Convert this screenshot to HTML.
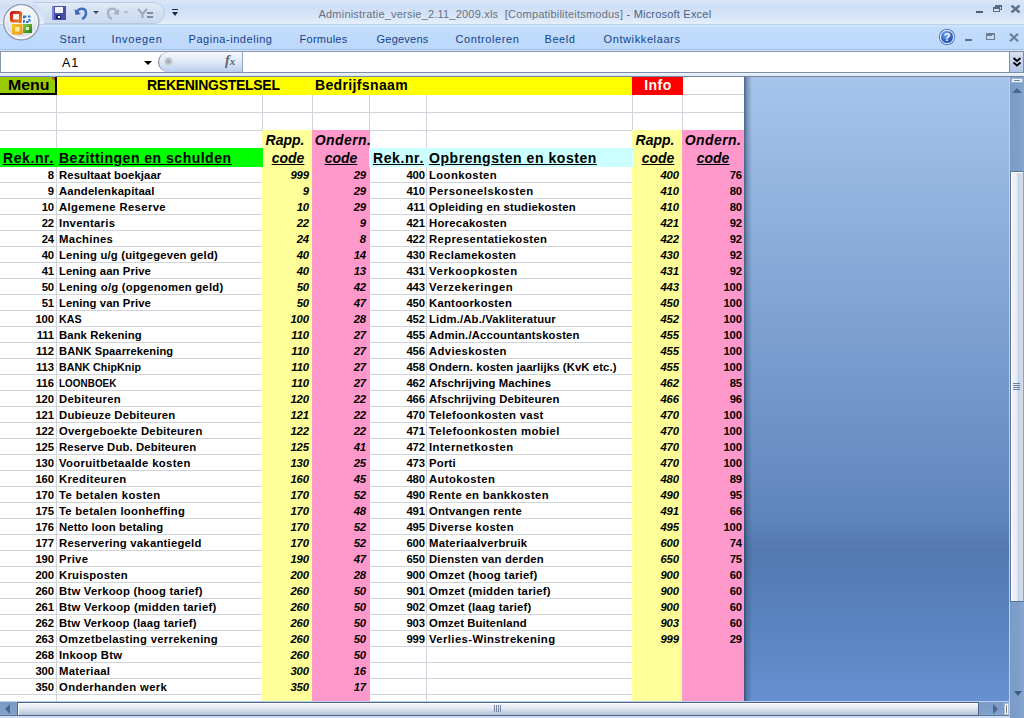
<!DOCTYPE html>
<html><head><meta charset="utf-8"><style>
html,body{margin:0;padding:0;width:1024px;height:718px;overflow:hidden;background:#fff}
body{position:relative;font-family:"Liberation Sans",sans-serif}
div,i{position:absolute;display:block}
i{font-style:normal;white-space:nowrap}
.d{font-size:11.3px;font-weight:bold;line-height:16px;color:#000;letter-spacing:0.1px}
.it{font-style:italic}
.h1{font-size:14px;font-weight:bold;line-height:17px;color:#000}
.h2{font-size:14px;font-weight:bold;line-height:18px;color:#000}
.wt{color:#fff}
.n{letter-spacing:-0.1px}
</style></head><body>
<div style="left:0px;top:77px;width:744px;height:624px;background:#ffffff;"></div>
<div style="left:56px;top:77px;width:1px;height:624px;background:#d1d3da;"></div>
<div style="left:262px;top:77px;width:1px;height:624px;background:#d1d3da;"></div>
<div style="left:312px;top:77px;width:1px;height:624px;background:#d1d3da;"></div>
<div style="left:369px;top:77px;width:1px;height:624px;background:#d1d3da;"></div>
<div style="left:426px;top:77px;width:1px;height:624px;background:#d1d3da;"></div>
<div style="left:632px;top:77px;width:1px;height:624px;background:#d1d3da;"></div>
<div style="left:682px;top:77px;width:1px;height:624px;background:#d1d3da;"></div>
<div style="left:0px;top:94px;width:744px;height:1px;background:#d1d3da;"></div>
<div style="left:0px;top:112px;width:744px;height:1px;background:#d1d3da;"></div>
<div style="left:0px;top:130px;width:744px;height:1px;background:#d1d3da;"></div>
<div style="left:0px;top:148px;width:744px;height:1px;background:#d1d3da;"></div>
<div style="left:0px;top:166px;width:744px;height:1px;background:#d1d3da;"></div>
<div style="left:0px;top:182px;width:744px;height:1px;background:#d1d3da;"></div>
<div style="left:0px;top:198px;width:744px;height:1px;background:#d1d3da;"></div>
<div style="left:0px;top:214px;width:744px;height:1px;background:#d1d3da;"></div>
<div style="left:0px;top:230px;width:744px;height:1px;background:#d1d3da;"></div>
<div style="left:0px;top:246px;width:744px;height:1px;background:#d1d3da;"></div>
<div style="left:0px;top:262px;width:744px;height:1px;background:#d1d3da;"></div>
<div style="left:0px;top:278px;width:744px;height:1px;background:#d1d3da;"></div>
<div style="left:0px;top:294px;width:744px;height:1px;background:#d1d3da;"></div>
<div style="left:0px;top:310px;width:744px;height:1px;background:#d1d3da;"></div>
<div style="left:0px;top:326px;width:744px;height:1px;background:#d1d3da;"></div>
<div style="left:0px;top:342px;width:744px;height:1px;background:#d1d3da;"></div>
<div style="left:0px;top:358px;width:744px;height:1px;background:#d1d3da;"></div>
<div style="left:0px;top:374px;width:744px;height:1px;background:#d1d3da;"></div>
<div style="left:0px;top:390px;width:744px;height:1px;background:#d1d3da;"></div>
<div style="left:0px;top:406px;width:744px;height:1px;background:#d1d3da;"></div>
<div style="left:0px;top:422px;width:744px;height:1px;background:#d1d3da;"></div>
<div style="left:0px;top:438px;width:744px;height:1px;background:#d1d3da;"></div>
<div style="left:0px;top:454px;width:744px;height:1px;background:#d1d3da;"></div>
<div style="left:0px;top:470px;width:744px;height:1px;background:#d1d3da;"></div>
<div style="left:0px;top:486px;width:744px;height:1px;background:#d1d3da;"></div>
<div style="left:0px;top:502px;width:744px;height:1px;background:#d1d3da;"></div>
<div style="left:0px;top:518px;width:744px;height:1px;background:#d1d3da;"></div>
<div style="left:0px;top:534px;width:744px;height:1px;background:#d1d3da;"></div>
<div style="left:0px;top:550px;width:744px;height:1px;background:#d1d3da;"></div>
<div style="left:0px;top:566px;width:744px;height:1px;background:#d1d3da;"></div>
<div style="left:0px;top:582px;width:744px;height:1px;background:#d1d3da;"></div>
<div style="left:0px;top:598px;width:744px;height:1px;background:#d1d3da;"></div>
<div style="left:0px;top:614px;width:744px;height:1px;background:#d1d3da;"></div>
<div style="left:0px;top:630px;width:744px;height:1px;background:#d1d3da;"></div>
<div style="left:0px;top:646px;width:744px;height:1px;background:#d1d3da;"></div>
<div style="left:0px;top:662px;width:744px;height:1px;background:#d1d3da;"></div>
<div style="left:0px;top:678px;width:744px;height:1px;background:#d1d3da;"></div>
<div style="left:0px;top:694px;width:744px;height:1px;background:#d1d3da;"></div>
<div style="left:0px;top:77px;width:57px;height:18px;background:#99cc00;"></div>
<div style="left:56px;top:77px;width:577px;height:18px;background:#ffff00;"></div>
<div style="left:632px;top:77px;width:51px;height:18px;background:#ff0000;"></div>
<div style="left:262px;top:130px;width:51px;height:571px;background:#ffff99;"></div>
<div style="left:312px;top:130px;width:58px;height:571px;background:#ff99cc;"></div>
<div style="left:632px;top:130px;width:51px;height:571px;background:#ffff99;"></div>
<div style="left:682px;top:130px;width:62px;height:571px;background:#ff99cc;"></div>
<div style="left:0px;top:148px;width:263px;height:19px;background:#00ff00;"></div>
<div style="left:369px;top:148px;width:264px;height:19px;background:#ccffff;"></div>
<i class="d n" style="right:970px;top:167px">8</i>
<i class="d" style="left:59px;top:167px;letter-spacing:0.1px">Resultaat boekjaar</i>
<i class="d it n" style="right:715px;top:167px">999</i>
<i class="d it n" style="right:658px;top:167px">29</i>
<i class="d n" style="right:970px;top:183px">9</i>
<i class="d" style="left:59px;top:183px;letter-spacing:0.167px">Aandelenkapitaal</i>
<i class="d it n" style="right:715px;top:183px">9</i>
<i class="d it n" style="right:658px;top:183px">29</i>
<i class="d n" style="right:970px;top:199px">10</i>
<i class="d" style="left:59px;top:199px;letter-spacing:0.367px">Algemene Reserve</i>
<i class="d it n" style="right:715px;top:199px">10</i>
<i class="d it n" style="right:658px;top:199px">29</i>
<i class="d n" style="right:970px;top:215px">22</i>
<i class="d" style="left:59px;top:215px;letter-spacing:0.289px">Inventaris</i>
<i class="d it n" style="right:715px;top:215px">22</i>
<i class="d it n" style="right:658px;top:215px">9</i>
<i class="d n" style="right:970px;top:231px">24</i>
<i class="d" style="left:59px;top:231px;letter-spacing:0.343px">Machines</i>
<i class="d it n" style="right:715px;top:231px">24</i>
<i class="d it n" style="right:658px;top:231px">8</i>
<i class="d n" style="right:970px;top:247px">40</i>
<i class="d" style="left:59px;top:247px;letter-spacing:0.185px">Lening u/g (uitgegeven geld)</i>
<i class="d it n" style="right:715px;top:247px">40</i>
<i class="d it n" style="right:658px;top:247px">14</i>
<i class="d n" style="right:970px;top:263px">41</i>
<i class="d" style="left:59px;top:263px;letter-spacing:0.093px">Lening aan Prive</i>
<i class="d it n" style="right:715px;top:263px">40</i>
<i class="d it n" style="right:658px;top:263px">13</i>
<i class="d n" style="right:970px;top:279px">50</i>
<i class="d" style="left:59px;top:279px;letter-spacing:0.231px">Lening o/g (opgenomen geld)</i>
<i class="d it n" style="right:715px;top:279px">50</i>
<i class="d it n" style="right:658px;top:279px">42</i>
<i class="d n" style="right:970px;top:295px">51</i>
<i class="d" style="left:59px;top:295px;letter-spacing:0.093px">Lening van Prive</i>
<i class="d it n" style="right:715px;top:295px">50</i>
<i class="d it n" style="right:658px;top:295px">47</i>
<i class="d n" style="right:970px;top:311px">100</i>
<i class="d" style="left:59px;top:311px;transform:scaleX(0.944);transform-origin:0 0">KAS</i>
<i class="d it n" style="right:715px;top:311px">100</i>
<i class="d it n" style="right:658px;top:311px">28</i>
<i class="d n" style="right:970px;top:327px">111</i>
<i class="d" style="left:59px;top:327px;letter-spacing:0.092px">Bank Rekening</i>
<i class="d it n" style="right:715px;top:327px">110</i>
<i class="d it n" style="right:658px;top:327px">27</i>
<i class="d n" style="right:970px;top:343px">112</i>
<i class="d" style="left:59px;top:343px;transform:scaleX(0.984);transform-origin:0 0">BANK Spaarrekening</i>
<i class="d it n" style="right:715px;top:343px">110</i>
<i class="d it n" style="right:658px;top:343px">27</i>
<i class="d n" style="right:970px;top:359px">113</i>
<i class="d" style="left:59px;top:359px;transform:scaleX(0.940);transform-origin:0 0">BANK ChipKnip</i>
<i class="d it n" style="right:715px;top:359px">110</i>
<i class="d it n" style="right:658px;top:359px">27</i>
<i class="d n" style="right:970px;top:375px">116</i>
<i class="d" style="left:59px;top:375px;transform:scaleX(0.869);transform-origin:0 0">LOONBOEK</i>
<i class="d it n" style="right:715px;top:375px">110</i>
<i class="d it n" style="right:658px;top:375px">27</i>
<i class="d n" style="right:970px;top:391px">120</i>
<i class="d" style="left:59px;top:391px;letter-spacing:0.3px">Debiteuren</i>
<i class="d it n" style="right:715px;top:391px">120</i>
<i class="d it n" style="right:658px;top:391px">22</i>
<i class="d n" style="right:970px;top:407px">121</i>
<i class="d" style="left:59px;top:407px;letter-spacing:0.217px">Dubieuze Debiteuren</i>
<i class="d it n" style="right:715px;top:407px">121</i>
<i class="d it n" style="right:658px;top:407px">22</i>
<i class="d n" style="right:970px;top:423px">122</i>
<i class="d" style="left:59px;top:423px;letter-spacing:0.264px">Overgeboekte Debiteuren</i>
<i class="d it n" style="right:715px;top:423px">122</i>
<i class="d it n" style="right:658px;top:423px">22</i>
<i class="d n" style="right:970px;top:439px">125</i>
<i class="d" style="left:59px;top:439px;letter-spacing:0.127px">Reserve Dub. Debiteuren</i>
<i class="d it n" style="right:715px;top:439px">125</i>
<i class="d it n" style="right:658px;top:439px">41</i>
<i class="d n" style="right:970px;top:455px">130</i>
<i class="d" style="left:59px;top:455px;letter-spacing:0.348px">Vooruitbetaalde kosten</i>
<i class="d it n" style="right:715px;top:455px">130</i>
<i class="d it n" style="right:658px;top:455px">25</i>
<i class="d n" style="right:970px;top:471px">160</i>
<i class="d" style="left:59px;top:471px;letter-spacing:0.38px">Krediteuren</i>
<i class="d it n" style="right:715px;top:471px">160</i>
<i class="d it n" style="right:658px;top:471px">45</i>
<i class="d n" style="right:970px;top:487px">170</i>
<i class="d" style="left:59px;top:487px;letter-spacing:0.412px">Te betalen kosten</i>
<i class="d it n" style="right:715px;top:487px">170</i>
<i class="d it n" style="right:658px;top:487px">52</i>
<i class="d n" style="right:970px;top:503px">175</i>
<i class="d" style="left:59px;top:503px;letter-spacing:0.295px">Te betalen loonheffing</i>
<i class="d it n" style="right:715px;top:503px">170</i>
<i class="d it n" style="right:658px;top:503px">48</i>
<i class="d n" style="right:970px;top:519px">176</i>
<i class="d" style="left:59px;top:519px;letter-spacing:0.1px">Netto loon betaling</i>
<i class="d it n" style="right:715px;top:519px">170</i>
<i class="d it n" style="right:658px;top:519px">52</i>
<i class="d n" style="right:970px;top:535px">177</i>
<i class="d" style="left:59px;top:535px;letter-spacing:0.239px">Reservering vakantiegeld</i>
<i class="d it n" style="right:715px;top:535px">170</i>
<i class="d it n" style="right:658px;top:535px">52</i>
<i class="d n" style="right:970px;top:551px">190</i>
<i class="d" style="left:59px;top:551px;letter-spacing:0.35px">Prive</i>
<i class="d it n" style="right:715px;top:551px">190</i>
<i class="d it n" style="right:658px;top:551px">47</i>
<i class="d n" style="right:970px;top:567px">200</i>
<i class="d" style="left:59px;top:567px;letter-spacing:0.28px">Kruisposten</i>
<i class="d it n" style="right:715px;top:567px">200</i>
<i class="d it n" style="right:658px;top:567px">28</i>
<i class="d n" style="right:970px;top:583px">260</i>
<i class="d" style="left:59px;top:583px;letter-spacing:0.25px">Btw Verkoop (hoog tarief)</i>
<i class="d it n" style="right:715px;top:583px">260</i>
<i class="d it n" style="right:658px;top:583px">50</i>
<i class="d n" style="right:970px;top:599px">261</i>
<i class="d" style="left:59px;top:599px;letter-spacing:0.281px">Btw Verkoop (midden tarief)</i>
<i class="d it n" style="right:715px;top:599px">260</i>
<i class="d it n" style="right:658px;top:599px">50</i>
<i class="d n" style="right:970px;top:615px">262</i>
<i class="d" style="left:59px;top:615px;letter-spacing:0.208px">Btw Verkoop (laag tarief)</i>
<i class="d it n" style="right:715px;top:615px">260</i>
<i class="d it n" style="right:658px;top:615px">50</i>
<i class="d n" style="right:970px;top:631px">263</i>
<i class="d" style="left:59px;top:631px;letter-spacing:0.296px">Omzetbelasting verrekening</i>
<i class="d it n" style="right:715px;top:631px">260</i>
<i class="d it n" style="right:658px;top:631px">50</i>
<i class="d n" style="right:970px;top:647px">268</i>
<i class="d" style="left:59px;top:647px;letter-spacing:0.233px">Inkoop Btw</i>
<i class="d it n" style="right:715px;top:647px">260</i>
<i class="d it n" style="right:658px;top:647px">50</i>
<i class="d n" style="right:970px;top:663px">300</i>
<i class="d" style="left:59px;top:663px;letter-spacing:0.238px">Materiaal</i>
<i class="d it n" style="right:715px;top:663px">300</i>
<i class="d it n" style="right:658px;top:663px">16</i>
<i class="d n" style="right:970px;top:679px">350</i>
<i class="d" style="left:59px;top:679px;letter-spacing:0.367px">Onderhanden werk</i>
<i class="d it n" style="right:715px;top:679px">350</i>
<i class="d it n" style="right:658px;top:679px">17</i>
<i class="d n" style="right:599px;top:167px">400</i>
<i class="d" style="left:429px;top:167px;letter-spacing:0.411px">Loonkosten</i>
<i class="d it n" style="right:345px;top:167px">400</i>
<i class="d n" style="right:282px;top:167px">76</i>
<i class="d n" style="right:599px;top:183px">410</i>
<i class="d" style="left:429px;top:183px;letter-spacing:0.5px">Personeelskosten</i>
<i class="d it n" style="right:345px;top:183px">410</i>
<i class="d n" style="right:282px;top:183px">80</i>
<i class="d n" style="right:599px;top:199px">411</i>
<i class="d" style="left:429px;top:199px;letter-spacing:0.221px">Opleiding en studiekosten</i>
<i class="d it n" style="right:345px;top:199px">410</i>
<i class="d n" style="right:282px;top:199px">80</i>
<i class="d n" style="right:599px;top:215px">421</i>
<i class="d" style="left:429px;top:215px;letter-spacing:0.273px">Horecakosten</i>
<i class="d it n" style="right:345px;top:215px">421</i>
<i class="d n" style="right:282px;top:215px">92</i>
<i class="d n" style="right:599px;top:231px">422</i>
<i class="d" style="left:429px;top:231px;letter-spacing:0.383px">Representatiekosten</i>
<i class="d it n" style="right:345px;top:231px">422</i>
<i class="d n" style="right:282px;top:231px">92</i>
<i class="d n" style="right:599px;top:247px">430</i>
<i class="d" style="left:429px;top:247px;letter-spacing:0.342px">Reclamekosten</i>
<i class="d it n" style="right:345px;top:247px">430</i>
<i class="d n" style="right:282px;top:247px">92</i>
<i class="d n" style="right:599px;top:263px">431</i>
<i class="d" style="left:429px;top:263px;letter-spacing:0.592px">Verkoopkosten</i>
<i class="d it n" style="right:345px;top:263px">431</i>
<i class="d n" style="right:282px;top:263px">92</i>
<i class="d n" style="right:599px;top:279px">443</i>
<i class="d" style="left:429px;top:279px;letter-spacing:0.592px">Verzekeringen</i>
<i class="d it n" style="right:345px;top:279px">443</i>
<i class="d n" style="right:282px;top:279px">100</i>
<i class="d n" style="right:599px;top:295px">450</i>
<i class="d" style="left:429px;top:295px;letter-spacing:0.258px">Kantoorkosten</i>
<i class="d it n" style="right:345px;top:295px">450</i>
<i class="d n" style="right:282px;top:295px">100</i>
<i class="d n" style="right:599px;top:311px">452</i>
<i class="d" style="left:429px;top:311px;letter-spacing:0.168px">Lidm./Ab./Vakliteratuur</i>
<i class="d it n" style="right:345px;top:311px">452</i>
<i class="d n" style="right:282px;top:311px">100</i>
<i class="d n" style="right:599px;top:327px">455</i>
<i class="d" style="left:429px;top:327px;letter-spacing:0.183px">Admin./Accountantskosten</i>
<i class="d it n" style="right:345px;top:327px">455</i>
<i class="d n" style="right:282px;top:327px">100</i>
<i class="d n" style="right:599px;top:343px">456</i>
<i class="d" style="left:429px;top:343px;letter-spacing:0.364px">Advieskosten</i>
<i class="d it n" style="right:345px;top:343px">455</i>
<i class="d n" style="right:282px;top:343px">100</i>
<i class="d n" style="right:599px;top:359px">458</i>
<i class="d" style="left:429px;top:359px;letter-spacing:0.103px">Ondern. kosten jaarlijks (KvK etc.)</i>
<i class="d it n" style="right:345px;top:359px">455</i>
<i class="d n" style="right:282px;top:359px">100</i>
<i class="d n" style="right:599px;top:375px">462</i>
<i class="d" style="left:429px;top:375px;letter-spacing:0.105px">Afschrijving Machines</i>
<i class="d it n" style="right:345px;top:375px">462</i>
<i class="d n" style="right:282px;top:375px">85</i>
<i class="d n" style="right:599px;top:391px">466</i>
<i class="d" style="left:429px;top:391px;letter-spacing:0.136px">Afschrijving Debiteuren</i>
<i class="d it n" style="right:345px;top:391px">466</i>
<i class="d n" style="right:282px;top:391px">96</i>
<i class="d n" style="right:599px;top:407px">470</i>
<i class="d" style="left:429px;top:407px;letter-spacing:0.328px">Telefoonkosten vast</i>
<i class="d it n" style="right:345px;top:407px">470</i>
<i class="d n" style="right:282px;top:407px">100</i>
<i class="d n" style="right:599px;top:423px">471</i>
<i class="d" style="left:429px;top:423px;letter-spacing:0.41px">Telefoonkosten mobiel</i>
<i class="d it n" style="right:345px;top:423px">470</i>
<i class="d n" style="right:282px;top:423px">100</i>
<i class="d n" style="right:599px;top:439px">472</i>
<i class="d" style="left:429px;top:439px;letter-spacing:0.477px">Internetkosten</i>
<i class="d it n" style="right:345px;top:439px">470</i>
<i class="d n" style="right:282px;top:439px">100</i>
<i class="d n" style="right:599px;top:455px">473</i>
<i class="d" style="left:429px;top:455px;letter-spacing:0.25px">Porti</i>
<i class="d it n" style="right:345px;top:455px">470</i>
<i class="d n" style="right:282px;top:455px">100</i>
<i class="d n" style="right:599px;top:471px">480</i>
<i class="d" style="left:429px;top:471px;letter-spacing:0.411px">Autokosten</i>
<i class="d it n" style="right:345px;top:471px">480</i>
<i class="d n" style="right:282px;top:471px">89</i>
<i class="d n" style="right:599px;top:487px">490</i>
<i class="d" style="left:429px;top:487px;letter-spacing:0.328px">Rente en bankkosten</i>
<i class="d it n" style="right:345px;top:487px">490</i>
<i class="d n" style="right:282px;top:487px">95</i>
<i class="d n" style="right:599px;top:503px">491</i>
<i class="d" style="left:429px;top:503px;letter-spacing:0.207px">Ontvangen rente</i>
<i class="d it n" style="right:345px;top:503px">491</i>
<i class="d n" style="right:282px;top:503px">66</i>
<i class="d n" style="right:599px;top:519px">495</i>
<i class="d" style="left:429px;top:519px;letter-spacing:0.323px">Diverse kosten</i>
<i class="d it n" style="right:345px;top:519px">495</i>
<i class="d n" style="right:282px;top:519px">100</i>
<i class="d n" style="right:599px;top:535px">600</i>
<i class="d" style="left:429px;top:535px;letter-spacing:0.287px">Materiaalverbruik</i>
<i class="d it n" style="right:345px;top:535px">600</i>
<i class="d n" style="right:282px;top:535px">74</i>
<i class="d n" style="right:599px;top:551px">650</i>
<i class="d" style="left:429px;top:551px;letter-spacing:0.194px">Diensten van derden</i>
<i class="d it n" style="right:345px;top:551px">650</i>
<i class="d n" style="right:282px;top:551px">75</i>
<i class="d n" style="right:599px;top:567px">900</i>
<i class="d" style="left:429px;top:567px;letter-spacing:0.267px">Omzet (hoog tarief)</i>
<i class="d it n" style="right:345px;top:567px">900</i>
<i class="d n" style="right:282px;top:567px">60</i>
<i class="d n" style="right:599px;top:583px">901</i>
<i class="d" style="left:429px;top:583px;letter-spacing:0.275px">Omzet (midden tarief)</i>
<i class="d it n" style="right:345px;top:583px">900</i>
<i class="d n" style="right:282px;top:583px">60</i>
<i class="d n" style="right:599px;top:599px">902</i>
<i class="d" style="left:429px;top:599px;letter-spacing:0.211px">Omzet (laag tarief)</i>
<i class="d it n" style="right:345px;top:599px">900</i>
<i class="d n" style="right:282px;top:599px">60</i>
<i class="d n" style="right:599px;top:615px">903</i>
<i class="d" style="left:429px;top:615px;letter-spacing:0.1px">Omzet Buitenland</i>
<i class="d it n" style="right:345px;top:615px">903</i>
<i class="d n" style="right:282px;top:615px">60</i>
<i class="d n" style="right:599px;top:631px">999</i>
<i class="d" style="left:429px;top:631px;letter-spacing:0.405px">Verlies-Winstrekening</i>
<i class="d it n" style="right:345px;top:631px">999</i>
<i class="d n" style="right:282px;top:631px">29</i>
<i class="h1" style="left:8px;top:77px;transform:scaleX(1.135);transform-origin:0 0">Menu</i>
<i class="h1" style="left:147px;top:77px;letter-spacing:-0.28px;">REKENINGSTELSEL</i>
<i class="h1" style="left:315px;top:77px;letter-spacing:0.36px;">Bedrijfsnaam</i>
<i class="h1 wt" style="left:558px;width:200px;text-align:center;top:77px;letter-spacing:0.5px;">Info</i>
<i class="h2 it" style="left:185px;width:200px;text-align:center;top:131px;">Rapp.</i>
<i class="h2 it" style="left:243px;width:200px;text-align:center;top:131px;letter-spacing:0.4px;">Ondern.</i>
<i class="h2 it" style="left:555px;width:200px;text-align:center;top:131px;">Rapp.</i>
<i class="h2 it" style="left:613px;width:200px;text-align:center;top:131px;letter-spacing:0.4px;">Ondern.</i>
<i class="h2 it" style="left:188px;width:200px;text-align:center;top:149px;"><u>code</u></i>
<i class="h2 it" style="left:241px;width:200px;text-align:center;top:149px;"><u>code</u></i>
<i class="h2 it" style="left:558px;width:200px;text-align:center;top:149px;"><u>code</u></i>
<i class="h2 it" style="left:613px;width:200px;text-align:center;top:149px;"><u>code</u></i>
<i class="h2" style="left:3px;top:149px;letter-spacing:0.6px;"><u>Rek.nr.</u></i>
<i class="h2" style="left:59px;top:149px;letter-spacing:0.5px;"><u>Bezittingen en schulden</u></i>
<i class="h2" style="left:373px;top:149px;letter-spacing:0.6px;"><u>Rek.nr.</u></i>
<i class="h2" style="left:429px;top:149px;letter-spacing:0.55px;"><u>Opbrengsten en kosten</u></i>
<div style="left:55px;top:77px;width:2px;height:18px;background:#000000;"></div>
<div style="left:0px;top:93px;width:57px;height:2px;background:#000000;"></div>
<div style="left:51px;top:77px;width:0;height:0;border-top:4px solid #b84a10;border-left:4px solid transparent"></div>
<div style="left:0;top:0;width:1024px;height:24px;background:linear-gradient(#dae6f7 0px,#d6e3f6 4px,#cfdff5 5px,#d2e1f6 12px,#d9e7f8 18px,#e4eefb 23px)"></div>
<div style="left:0;top:24px;width:1024px;height:1px;background:#b9d0ee"></div>
<div style="left:0;top:25px;width:1024px;height:24px;background:linear-gradient(#d3e6fc 0px,#c3dcfb 3px,#bcd8fb 24px)"></div>
<div style="left:0;top:49px;width:1024px;height:1px;background:#9fbde6"></div>
<div style="left:0;top:50px;width:1024px;height:27px;background:#d5e4f6"></div>
<div style="left:0;top:73px;width:1024px;height:3px;background:linear-gradient(#eef4fb,#dce8f7)"></div>
<div style="left:0;top:51px;width:1009px;height:22px;background:#fff;border-top:1px solid #8696ab;border-bottom:1px solid #7d8ea3;box-sizing:border-box;"></div>
<div style="left:0;top:51px;width:1px;height:22px;background:#8696ab"></div>
<div style="left:0;top:76px;width:1024px;height:1px;background:#75879c"></div>
<div style="left:0;top:76px;width:50px;height:1px;background:#6f6fc8"></div>
<div style="left:50px;top:76px;width:6px;height:1px;background:#72b6e6"></div>
<i style="left:62px;top:56px;font-size:12.5px;line-height:14px;letter-spacing:1px;color:#000">A1</i>
<div style="left:144px;top:61px;width:0;height:0;border-left:4px solid transparent;border-right:4px solid transparent;border-top:4px solid #000"></div>
<div style="left:158px;top:52px;width:85px;height:20px;border-radius:10px 0 0 10px;background:linear-gradient(#f6f9fd,#dfe9f6 50%,#b9cdef);border-left:1px solid #6f8299;box-sizing:border-box"></div>
<div style="left:242px;top:51px;width:1px;height:22px;background:#95a8c2"></div>
<div style="left:164px;top:57px;width:9px;height:9px;border-radius:5px;background:radial-gradient(#9aa0a8,#d7dde6 70%,transparent)"></div>
<i style="left:225px;top:53px;font-family:Liberation Serif,serif;font-style:italic;font-weight:bold;font-size:14px;line-height:16px;color:#5a6475">f<span style="font-size:11px">x</span></i>
<div style="left:1009px;top:51px;width:15px;height:22px;background:linear-gradient(#d6e2f2,#c4d5ec 50%,#b0c6e6);border:1px solid #7d8ea3;box-sizing:border-box"></div>
<svg style="position:absolute;left:1012px;top:57px" width="10" height="10" viewBox="0 0 10 10"><path d="M1.5 1 L5 4 L8.5 1 M1.5 5.5 L5 8.5 L8.5 5.5" stroke="#000" stroke-width="1.9" fill="none"/></svg>
<i style="left:318.5px;top:7px;font-size:11px;line-height:14px;letter-spacing:0.205px;color:#687283">Administratie_versie_2.11_2009.xls&nbsp; [Compatibiliteitsmodus] <span style="color:#4b5f86">- Microsoft Excel</span></i>
<i style="left:59.5px;top:32px;font-size:11px;line-height:14px;letter-spacing:0.554px;color:#15428b">Start</i>
<i style="left:111.5px;top:32px;font-size:11px;line-height:14px;letter-spacing:0.716px;color:#15428b">Invoegen</i>
<i style="left:188.5px;top:32px;font-size:11px;line-height:14px;letter-spacing:0.544px;color:#15428b">Pagina-indeling</i>
<i style="left:299.5px;top:32px;font-size:11px;line-height:14px;letter-spacing:0.270px;color:#15428b">Formules</i>
<i style="left:376.5px;top:32px;font-size:11px;line-height:14px;letter-spacing:0.230px;color:#15428b">Gegevens</i>
<i style="left:455.5px;top:32px;font-size:11px;line-height:14px;letter-spacing:0.593px;color:#15428b">Controleren</i>
<i style="left:544.5px;top:32px;font-size:11px;line-height:14px;letter-spacing:0.572px;color:#15428b">Beeld</i>
<i style="left:603.5px;top:32px;font-size:11px;line-height:14px;letter-spacing:0.609px;color:#15428b">Ontwikkelaars</i>
<div style="left:976px;top:11px;width:7px;height:2px;background:#4d5f7a"></div>
<div style="left:995px;top:5px;width:7px;height:5px;border:1px solid #5a6b85;border-top-width:2px;box-sizing:border-box"></div>
<div style="left:993px;top:7px;width:7px;height:5px;border:1px solid #5a6b85;border-top-width:2px;box-sizing:border-box;background:#d6e3f4"></div>
<svg style="position:absolute;left:1010px;top:5px" width="11" height="8" viewBox="0 0 11 8"><path d="M1.5 0.5 L9.5 7.5 M9.5 0.5 L1.5 7.5" stroke="#5f6f88" stroke-width="2.4"/></svg>
<div style="left:940px;top:30px;width:14px;height:14px;border-radius:7px;background:radial-gradient(circle at 40% 30%,#7aa6f0,#2354b8 65%,#163c8c);border:1px solid #eef4ff;box-sizing:border-box;box-shadow:0 0 0 1px #3f6cb8"></div>
<i style="left:940px;top:30px;width:14px;text-align:center;font-size:11px;line-height:14px;font-weight:bold;color:#fff">?</i>
<div style="left:965px;top:39px;width:7px;height:2px;background:#5f6f86"></div>
<div style="left:986px;top:33px;width:9px;height:7px;border:1px solid #6d7d93;border-top-width:2px;box-sizing:border-box"></div>
<div style="left:986px;top:35px;width:6px;height:1px;background:#6d7d93"></div>
<svg style="position:absolute;left:1009px;top:33px" width="10" height="9" viewBox="0 0 10 9"><path d="M1 0.8 L9 8.2 M9 0.8 L1 8.2" stroke="#6d7d93" stroke-width="2.2"/></svg>
<div style="left:30px;top:2px;width:135px;height:22px;border-radius:0 11px 11px 0;background:linear-gradient(#e1eaf6,#d3e0f2 50%,#cbdaf0);border:1px solid #b9cbe3;box-sizing:border-box"></div>
<div style="left:0;top:0;width:60px;height:24px;overflow:hidden"><div style="left:-2px;top:-1px;width:46px;height:46px;border-radius:23px;background:linear-gradient(#dae6f7 1px,#d6e3f6 5px,#cfdff5 6px,#d2e1f6 13px,#d9e7f8 19px,#e4eefb 24px)"></div></div>
<svg style="position:absolute;left:52px;top:6px" width="14" height="14" viewBox="0 0 14 14"><rect x="0" y="0" width="14" height="14" fill="#4a4fae"/><rect x="0" y="0" width="2" height="14" fill="#7a84d6"/><rect x="3" y="1" width="8" height="6" fill="#f4f6ff"/><rect x="4" y="9" width="5" height="4" fill="#1e2360"/><rect x="6" y="10" width="2" height="2" fill="#fff"/></svg>
<svg style="position:absolute;left:74px;top:6px" width="15" height="14" viewBox="0 0 15 14"><path d="M3 6 C5 1.5 12 1.5 12 7 C12 10 10 12 8 13" stroke="#3f6fc2" stroke-width="2.6" fill="none"/><path d="M0.5 3 L1.5 9 L7 8 Z" fill="#3a66b8"/></svg>
<div style="left:93px;top:11px;width:0;height:0;border-left:3px solid transparent;border-right:3px solid transparent;border-top:3px solid #33466a"></div>
<svg style="position:absolute;left:105px;top:6px" width="15" height="14" viewBox="0 0 15 14"><g transform="translate(15,0) scale(-1,1)"><path d="M3 6 C5 1.5 12 1.5 12 7 C12 10 10 12 8 13" stroke="#a9b6c8" stroke-width="2.6" fill="none"/><path d="M0.5 3 L1.5 9 L7 8 Z" fill="#a3b0c3"/></g></svg>
<div style="left:123px;top:11px;width:0;height:0;border-left:3px solid transparent;border-right:3px solid transparent;border-top:3px solid #b3bfcf"></div>
<svg style="position:absolute;left:137px;top:8px" width="17" height="11" viewBox="0 0 17 11"><path d="M1 1 L5.5 6 L10 1 M5.5 6 L5.5 10" stroke="#9aa7b9" stroke-width="2" fill="none"/><rect x="10" y="4" width="6" height="2" fill="#7e8ba0"/><rect x="10" y="8" width="6" height="2" fill="#7e8ba0"/></svg>
<div style="left:172px;top:9px;width:6px;height:1px;background:#1b2b4d"></div>
<div style="left:172px;top:12px;width:0;height:0;border-left:3px solid transparent;border-right:3px solid transparent;border-top:4px solid #1b2b4d"></div>
<svg style="position:absolute;left:2px;top:3px" width="40" height="40" viewBox="0 0 40 40">
<defs><radialGradient id="ob" cx="50%" cy="30%" r="65%"><stop offset="0" stop-color="#ffffff"/><stop offset="0.55" stop-color="#eef2f8"/><stop offset="0.85" stop-color="#d5dde8"/><stop offset="1" stop-color="#f4f7fb"/></radialGradient>
<linearGradient id="rg" x1="0" y1="0" x2="1" y2="1"><stop offset="0" stop-color="#c8161a"/><stop offset="1" stop-color="#f08a1c"/></linearGradient>
<linearGradient id="yg" x1="0" y1="0" x2="1" y2="1"><stop offset="0" stop-color="#f6c026"/><stop offset="1" stop-color="#f19a12"/></linearGradient>
<linearGradient id="gg" x1="0" y1="0" x2="1" y2="1"><stop offset="0" stop-color="#7cc242"/><stop offset="1" stop-color="#2d8a1c"/></linearGradient></defs>
<circle cx="19.3" cy="19.3" r="17.6" fill="url(#ob)" stroke="#8e99aa" stroke-width="1.3"/>
<circle cx="19.3" cy="19.3" r="16.2" fill="none" stroke="#ffffff" stroke-width="1" opacity="0.8"/>
<rect x="9.5" y="9.5" width="9" height="8.5" rx="1.5" fill="none" stroke="url(#rg)" stroke-width="3.2"/>
<rect x="22" y="13.5" width="5.5" height="5.5" fill="none" stroke="#2b78d0" stroke-width="2" stroke-dasharray="2.5 1.5"/>
<rect x="11.5" y="22.5" width="7.5" height="7.5" fill="#fde9a8" stroke="url(#yg)" stroke-width="3"/>
<rect x="22.5" y="22.5" width="6" height="6" fill="#d9efc8" stroke="url(#gg)" stroke-width="3"/>
<circle cx="18.3" cy="18.7" r="1.3" fill="#d0601e"/>
</svg>
<div style="left:744px;top:77px;width:265px;height:624px;background:linear-gradient(#a6c4ec 0%,#88a9d8 30%,#5f86bd 70%,#5379b0 76%,#5a84c0 88%,#6690d0 100%)"></div>
<div style="left:744px;top:77px;width:8px;height:624px;background:linear-gradient(90deg,rgba(40,55,85,0.7),rgba(50,80,110,0.4) 35%,rgba(80,100,130,0))"></div>
<div style="left:1009px;top:77px;width:15px;height:641px;background:linear-gradient(90deg,#7a9bc6,#7f9fca 60%,#86a5cf)"></div>
<div style="left:1009px;top:77px;width:1px;height:641px;background:#b9d0f0"></div>
<div style="left:1011px;top:78px;width:12px;height:5px;background:#eef3fa;border:1px solid #9db3d1;box-sizing:border-box"></div>
<div style="left:1014px;top:80px;width:6px;height:1px;background:#6f86a8"></div>
<div style="left:1012px;top:88px;width:0;height:0;border-left:5px solid transparent;border-right:5px solid transparent;border-bottom:5px solid #4b6590"></div>
<div style="left:1010px;top:171px;width:14px;height:431px;background:linear-gradient(90deg,#f0f3f9,#e9eef6 45%,#c9d5e5 60%,#d2dcea);border:1px solid #5d7396;border-right-color:#8ea3c2;box-sizing:border-box;box-shadow:inset 1px 1px 0 #fff"></div>
<div style="left:1013px;top:383px;width:7px;height:1px;background:#6a7f9f;box-shadow:0 2px 0 #6a7f9f,0 4px 0 #6a7f9f,0 6px 0 #6a7f9f"></div>
<div style="left:1014px;top:691px;width:0;height:0;border-left:4px solid transparent;border-right:4px solid transparent;border-top:5px solid #3f5a88"></div>
<div style="left:0;top:701px;width:1009px;height:17px;background:linear-gradient(#7a9bc6,#7f9fca 60%,#86a5cf)"></div>
<div style="left:0;top:701px;width:1009px;height:1px;background:#b9d0f0"></div>
<div style="left:0;top:715px;width:1009px;height:1px;background:#60769a"></div>
<div style="left:0;top:716px;width:1009px;height:2px;background:#cddcf0"></div>
<div style="left:5px;top:704px;width:0;height:0;border-top:5px solid transparent;border-bottom:5px solid transparent;border-right:5px solid #4b6590"></div>
<div style="left:17px;top:702px;width:962px;height:14px;background:linear-gradient(#f3f5fa,#e6ebf3 40%,#c6d1e2 75%,#b4c2d8);border:1px solid #4f6385;box-sizing:border-box;box-shadow:inset 1px 1px 0 #fff"></div>
<div style="left:494px;top:705px;width:1px;height:7px;background:#76869e;box-shadow:2px 0 0 #76869e,4px 0 0 #76869e,6px 0 0 #76869e"></div>
<div style="left:993px;top:704px;width:0;height:0;border-top:5px solid transparent;border-bottom:5px solid transparent;border-left:5px solid #4b6590"></div>
<div style="left:1004px;top:703px;width:5px;height:12px;background:#fff;border:1px solid #aabcd6;box-sizing:border-box"></div>
<div style="left:1006px;top:705px;width:1px;height:8px;background:#7a7a7a"></div>
</body></html>
